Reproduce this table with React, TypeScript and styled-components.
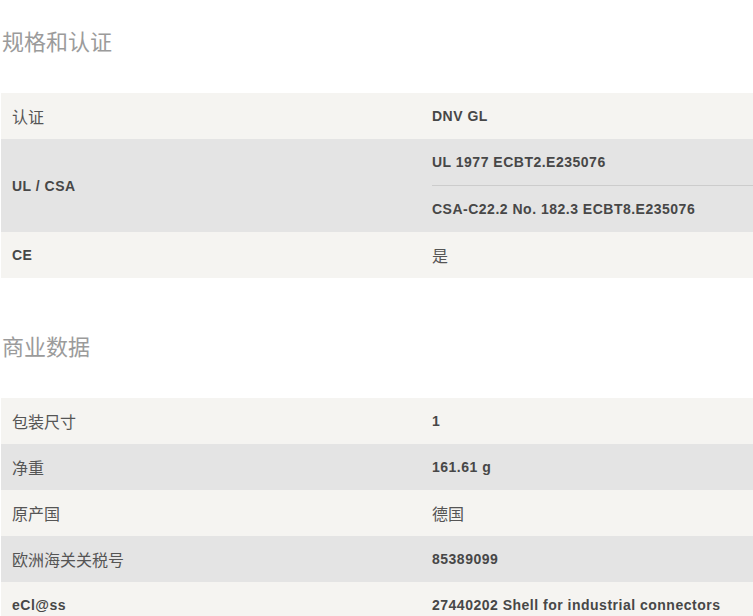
import React from 'react';
import styled, { createGlobalStyle } from 'styled-components';

const GlobalStyle = createGlobalStyle`
    body {
        margin: 0;
        background: #ffffff;
        font-family: 'Liberation Sans', 'Noto Sans CJK SC', sans-serif;
    }
`;

const Page = styled.div`
    padding: 25px 0 0 1px;
    display: flex;
    flex-direction: column;
    gap: 52px;
    width: 780px;
`;

const Section = styled.section`
    display: flex;
    flex-direction: column;
`;

const SectionTitle = styled.h2`
    margin: 0 0 38px 1px;
    font-size: 22px;
    line-height: 30px;
    font-weight: 400;
    color: #9b9b9b;
    font-family: 'Noto Sans CJK SC', sans-serif;
`;

const Row = styled.div<{ $shade: boolean }>`
    display: grid;
    grid-template-columns: 431px 1fr;
    background: ${(p) => (p.$shade ? '#e4e4e4' : '#f5f4f1')};
    color: #474747;
    font-size: 14px;
`;

const Label = styled.div<{ $cjk: boolean }>`
    display: flex;
    align-items: center;
    padding-left: 11px;
    font-size: ${(p) => (p.$cjk ? '16px' : '14px')};
    color: ${(p) => (p.$cjk ? '#555555' : '#474747')};
    font-weight: ${(p) => (p.$cjk ? 400 : 700)};
    letter-spacing: ${(p) => (p.$cjk ? '0' : '0.5px')};
    font-family: ${(p) => (p.$cjk ? "'Noto Sans CJK SC', sans-serif" : "'Liberation Sans', sans-serif")};
`;

const Values = styled.div`
    display: flex;
    flex-direction: column;
`;

const Value = styled.div<{ $cjk: boolean }>`
    height: 46px;
    display: flex;
    align-items: center;
    font-size: ${(p) => (p.$cjk ? '16px' : '14px')};
    color: ${(p) => (p.$cjk ? '#555555' : '#474747')};
    font-weight: ${(p) => (p.$cjk ? 400 : 700)};
    letter-spacing: ${(p) => (p.$cjk ? '0' : '0.5px')};
    font-family: ${(p) => (p.$cjk ? "'Noto Sans CJK SC', sans-serif" : "'Liberation Sans', sans-serif")};
    & + & {
        border-top: 1px solid #cccccc;
    }
`;

type Item = { label: string; values: string[] };

const hasCjk = (s: string) => /[\u3400-\u9fff]/.test(s);

const specs: Item[] = [
    { label: '认证', values: ['DNV GL'] },
    { label: 'UL / CSA', values: ['UL 1977 ECBT2.E235076', 'CSA-C22.2 No. 182.3 ECBT8.E235076'] },
    { label: 'CE', values: ['是'] },
];

const commercial: Item[] = [
    { label: '包装尺寸', values: ['1'] },
    { label: '净重', values: ['161.61 g'] },
    { label: '原产国', values: ['德国'] },
    { label: '欧洲海关关税号', values: ['85389099'] },
    { label: 'eCl@ss', values: ['27440202 Shell for industrial connectors'] },
];

const Table = ({ items }: { items: Item[] }) => (
    <div>
        {items.map((item, i) => (
            <Row key={item.label} $shade={i % 2 === 1}>
                <Label $cjk={hasCjk(item.label)}>{item.label}</Label>
                <Values>
                    {item.values.map((v) => (
                        <Value key={v} $cjk={hasCjk(v)}>
                            {v}
                        </Value>
                    ))}
                </Values>
            </Row>
        ))}
    </div>
);

export default function App() {
    return (
        <>
            <GlobalStyle />
            <Page>
                <Section>
                    <SectionTitle>规格和认证</SectionTitle>
                    <Table items={specs} />
                </Section>
                <Section>
                    <SectionTitle>商业数据</SectionTitle>
                    <Table items={commercial} />
                </Section>
            </Page>
        </>
    );
}
